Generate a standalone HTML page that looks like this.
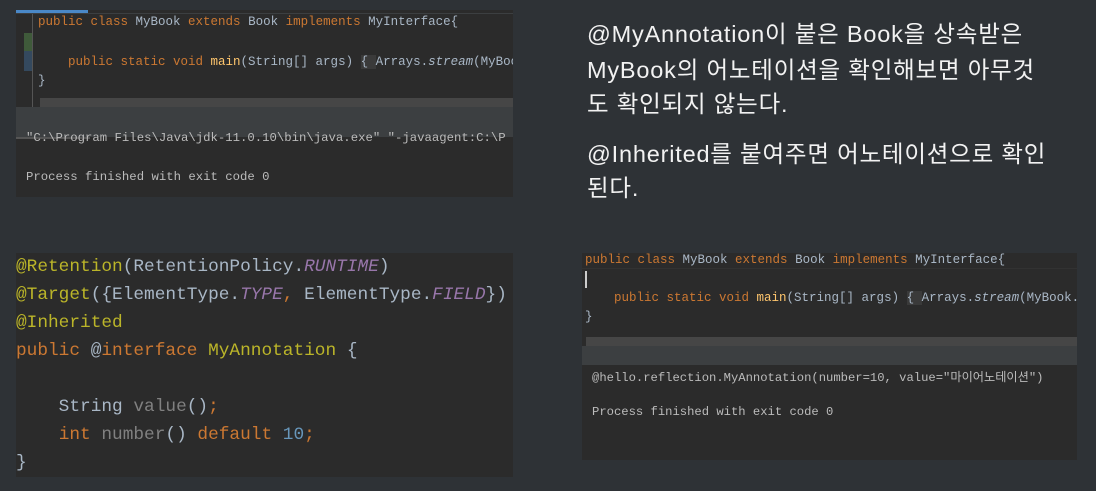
<!DOCTYPE html>
<html><head><meta charset="utf-8"><style>
*{margin:0;padding:0;box-sizing:border-box}
body{width:1096px;height:491px;background:#2e3236;position:relative;overflow:hidden;font-family:"Liberation Mono","Noto Sans CJK KR",monospace}
.p{position:absolute;background:#2b2b2b;overflow:hidden}
.l{position:absolute;white-space:pre;color:#a9b7c6}
.k{color:#cc7832}.f{color:#ffc66d}.a{color:#bbb529}.c{color:#9876aa;font-style:italic}.n{color:#6897bb}.g{color:#808080}
.t{position:absolute;left:587px;color:#f2f2f2;font-family:"Liberation Sans","Noto Sans CJK KR",sans-serif;font-size:23.5px;letter-spacing:0.8px;white-space:nowrap}
</style></head><body>
<div class="p" style="left:16px;top:10px;width:497px;height:187px">
 <div style="position:absolute;left:0;top:0;width:72px;height:3px;background:#4a88c7"></div>
 <div style="position:absolute;left:0;top:3px;width:497px;height:1px;background:#3c3f41"></div>
 <div style="position:absolute;left:8px;top:23px;width:8px;height:18px;background:#3f5a3a"></div>
 <div style="position:absolute;left:8px;top:41px;width:8px;height:20px;background:#34495e"></div>
 <div style="position:absolute;left:16px;top:4px;width:1px;height:96px;background:#555"></div>
 <div class="l" style="left:22px;top:5px;font-size:12.5px"><span class="k">public class </span>MyBook <span class="k">extends </span>Book <span class="k">implements </span>MyInterface{</div>
 <div class="l" style="left:52px;top:45px;font-size:12.5px"><span class="k">public static void </span><span class="f">main</span>(String[] args) <span style="background:#3a3a3a">{ </span>Arrays.<i>stream</i>(MyBook</div>
 <div class="l" style="left:22px;top:64px;font-size:12.5px">}</div>
 <div style="position:absolute;left:24px;top:88px;width:473px;height:9px;background:#464646"></div>
 <div style="position:absolute;left:0;top:97px;width:497px;height:30px;background:#3c3f41"></div>
 <div style="position:absolute;left:0;top:127px;width:74px;height:2px;background:#555"></div>
 <div class="l" style="left:10px;top:121px;font-size:12.3px;color:#bbb">"C:\Program Files\Java\jdk-11.0.10\bin\java.exe" "-javaagent:C:\P</div>
 <div class="l" style="left:10px;top:160px;font-size:12.3px;color:#bbb">Process finished with exit code 0</div>
</div>
<div class="p" style="left:16px;top:253px;width:497px;height:224px;font-size:17.8px">
 <div class="l" style="left:0;top:4px"><span class="a">@Retention</span>(RetentionPolicy.<span class="c">RUNTIME</span>)</div>
 <div class="l" style="left:0;top:32px"><span class="a">@Target</span>({ElementType.<span class="c">TYPE</span><span class="k">, </span>ElementType.<span class="c">FIELD</span>})</div>
 <div class="l" style="left:0;top:60px"><span class="a">@Inherited</span></div>
 <div class="l" style="left:0;top:88px"><span class="k">public </span>@<span class="k">interface </span><span class="a">MyAnnotation </span>{</div>
 <div class="l" style="left:0;top:144px">    String <span class="g">value</span>()<span class="k">;</span></div>
 <div class="l" style="left:0;top:172px">    <span class="k">int </span><span class="g">number</span>() <span class="k">default </span><span class="n">10</span><span class="k">;</span></div>
 <div class="l" style="left:0;top:200px">}</div>
</div>
<div class="t" style="top:15px">@MyAnnotation이 붙은 Book을 상속받은</div>
<div class="t" style="top:51px">MyBook의 어노테이션을 확인해보면 아무것</div>
<div class="t" style="top:85px">도 확인되지 않는다.</div>
<div class="t" style="top:135px">@Inherited를 붙여주면 어노테이션으로 확인</div>
<div class="t" style="top:169px">된다.</div>
<div class="p" style="left:582px;top:253px;width:495px;height:207px;font-size:12.5px">
 <div style="position:absolute;left:0;top:15px;width:495px;height:1px;background:#323232"></div>
 <div class="l" style="left:3px;top:0"><span class="k">public class </span>MyBook <span class="k">extends </span>Book <span class="k">implements </span>MyInterface{</div>
 <div style="position:absolute;left:3px;top:18px;width:2px;height:17px;background:#ccc"></div>
 <div class="l" style="left:32px;top:38px"><span class="k">public static void </span><span class="f">main</span>(String[] args) <span style="background:#3a3a3a">{ </span>Arrays.<i>stream</i>(MyBook.c</div>
 <div class="l" style="left:3px;top:57px">}</div>
 <div style="position:absolute;left:4px;top:84px;width:491px;height:9px;background:#464646"></div>
 <div style="position:absolute;left:0;top:93px;width:495px;height:19px;background:#3c3f41"></div>
 <div class="l" style="left:10px;top:114px;font-size:12.2px;color:#bbb">@hello.reflection.MyAnnotation(number=10, value="마이어노테이션")</div>
 <div class="l" style="left:10px;top:152px;font-size:12.2px;color:#bbb">Process finished with exit code 0</div>
</div>
</body></html>
